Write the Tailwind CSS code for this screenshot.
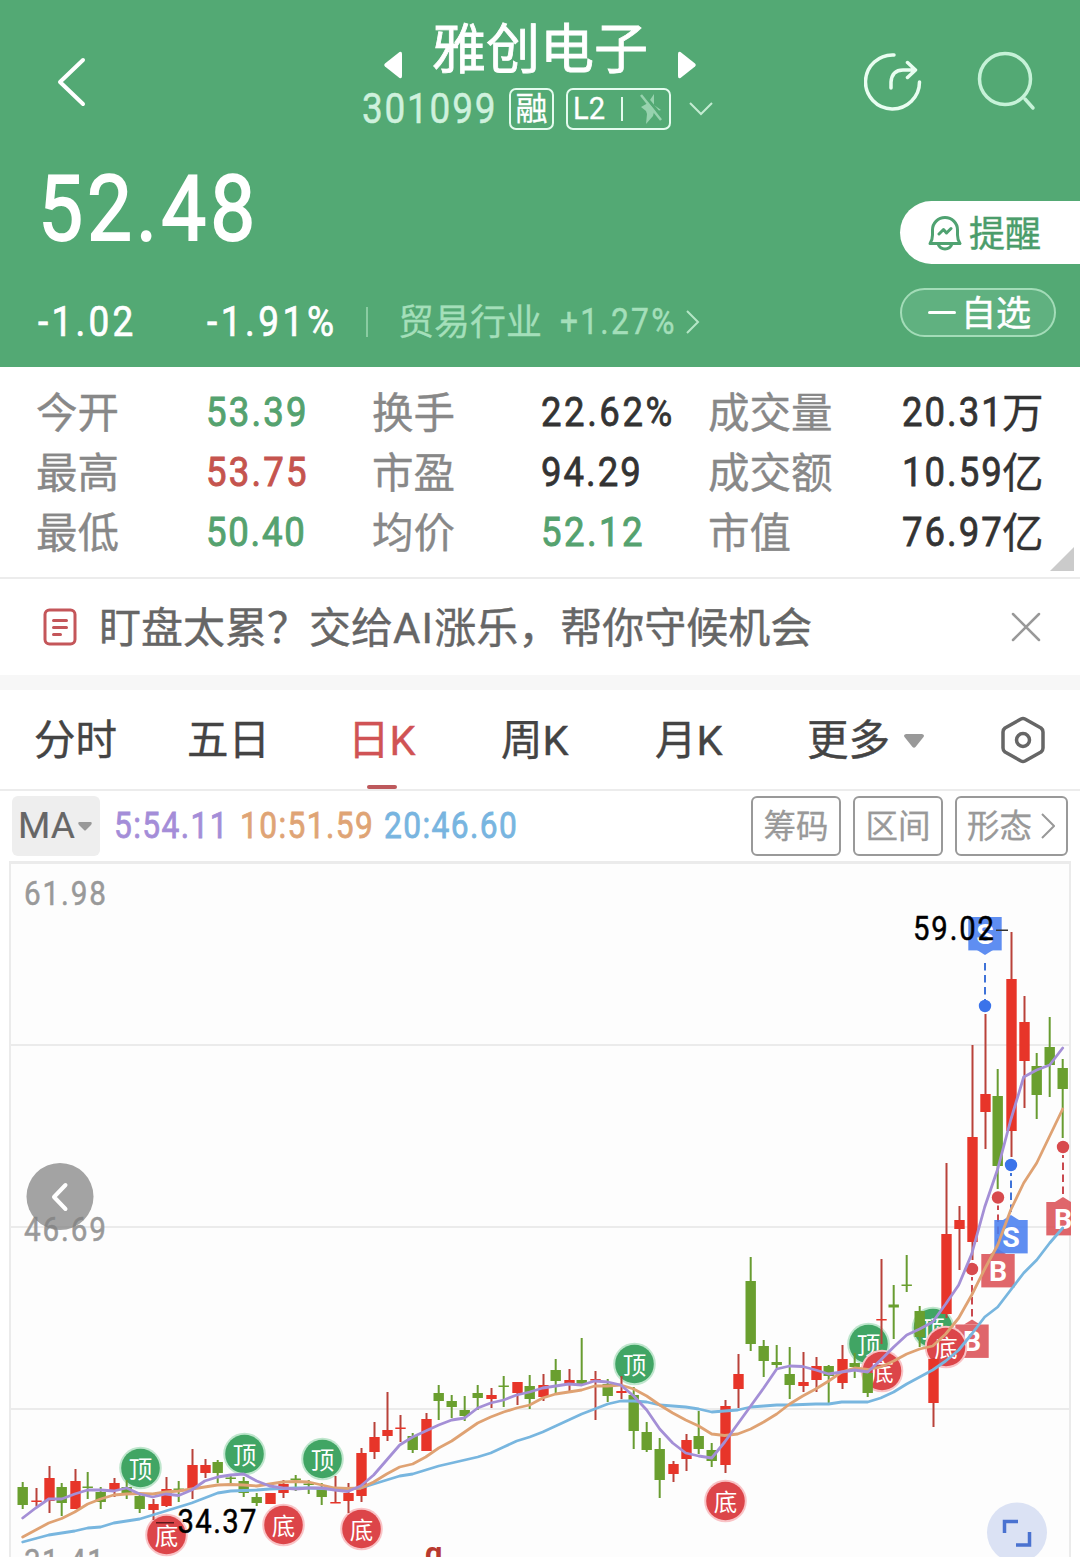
<!DOCTYPE html>
<html lang="zh-CN">
<head>
    <meta charset="UTF-8">
    <meta name="viewport" content="width=device-width, initial-scale=1.0">
    <title>雅创电子 301099</title>
    <script src="https://cdn.jsdelivr.net/npm/@tailwindcss/browser@4"></script>
</head>
<body class="w-[1080px] h-[1557px] overflow-hidden bg-white font-[Roboto,'Noto_Sans_CJK_SC',sans-serif] whitespace-nowrap">
    <!-- Header -->
    <header class="h-[367px] bg-[#53a974] text-white">
        <div class="h-[140px] grid grid-cols-[362px_356px_1fr]">
            <div class="pt-[56px] pl-[56px]">
                <svg class="w-[32px] h-[52px]" viewBox="0 0 32 52" fill="none" stroke="#fff" stroke-width="4" stroke-linecap="round" stroke-linejoin="round"><path d="M27 4L4 26L27 48"/></svg>
            </div>
            <div class="flex flex-col">
                <div class="h-[88px] flex items-start pl-[22px]">
                    <svg class="mt-[51px] w-[18px] h-[28px]" viewBox="0 0 18 28" fill="#fff"><path d="M15.5 1Q18 0 18 3V25Q18 28 15.5 27L1 15.5Q-.5 14 1 12.5Z"/></svg>
                    <h1 class="ml-[30px] mt-[11px] text-[54px] leading-[80px] [-webkit-text-stroke:0.8px]">雅创电子</h1>
                    <svg class="ml-[30px] mt-[51px] w-[18px] h-[28px]" viewBox="0 0 18 28" fill="#fff"><path d="M2.5 1Q0 0 0 3V25Q0 28 2.5 27L17 15.5Q18.500 14 17 12.500Z"/></svg>
                </div>
                <div class="h-[42px] flex items-center">
                    <div class="w-[147px]"><span class="inline-block origin-left scale-x-[0.88] tracking-[2px] text-[42px] leading-[42px] text-[#cff1dd] [-webkit-text-stroke:0.5px]">301099</span></div>
                    <div class="w-[45px] h-[42px] border-2 border-[#e4fbee] rounded-[7px] text-[32px] leading-[38px] text-center [-webkit-text-stroke:0.3px]"><span class="-mx-1">融</span></div>
                    <div class="ml-[12px] w-[105px] h-[42px] border-2 border-[#e4fbee] rounded-[7px] flex items-center pl-[5px]">
                        <span class="w-[48px] text-[31px] leading-[38px] [-webkit-text-stroke:0.3px]"><span class="inline-block origin-left scale-x-[0.94]">L2</span></span>
                        <span class="w-[2px] h-[24px] bg-[#e4fbee]"></span>
                        <svg class="ml-[17px] w-[22px] h-[32px]" viewBox="0 0 22 32"><path fill="#97d2ae" d="M14 1L8 10L1 14L6 18L7 21L6 31L13 23L14 19L21 17L14 12Z"/><path stroke="#53a974" stroke-width="3" d="M4 2L24 26"/><path stroke="#97d2ae" stroke-width="2.500" d="M1 2L21 27"/></svg>
                    </div>
                    <svg class="ml-[18px] w-[24px] h-[14px]" viewBox="0 0 24 14" fill="none" stroke="#c3ecd2" stroke-width="2"><path d="M1 1L12 12L23 1"/></svg>
                </div>
            </div>
            <div class="flex pl-[146px] pt-[50px]">
                <svg class="w-[60px] h-[62px]" viewBox="0 0 60 62" fill="none" stroke="#e9fdf1" stroke-width="3.500" stroke-linecap="round" stroke-linejoin="round"><path d="M30 5A27 27 0 1 0 55.500 32M27 38V32Q28 20 39 20H50M43.500 12.500L51.500 20L43.500 27.500"/></svg>
                <svg class="ml-[52px] w-[62px] h-[62px]" viewBox="0 0 62 62" fill="none" stroke="#c6f2d8" stroke-width="3.500" stroke-linecap="round"><circle cx="29" cy="29" r="25.500"/><path d="M49 49L57 58"/></svg>
            </div>
        </div>

        <div class="h-[227px] grid grid-cols-[900px_180px]">
            <div class="pl-[38px]">
                <div class="h-[137px] pt-[23px]"><span class="inline-block origin-left scale-x-[0.88] tracking-[4.6px] text-[91px] leading-[92px] [-webkit-text-stroke:1.8px]">52.48</span></div>
                <div class="h-[90px] flex items-center text-[42px] leading-[44px]">
                    <div class="w-[169px] [-webkit-text-stroke:0.7px]"><span class="inline-block origin-left scale-x-[0.88] tracking-[3.7px]">-1.02</span></div>
                    <div class="w-[159px] [-webkit-text-stroke:0.7px]"><span class="inline-block origin-left scale-x-[0.88] tracking-[4px]">-1.91%</span></div>
                    <span class="w-[2px] h-[30px] bg-[#8acca2]"></span>
                    <span class="ml-[30px] pt-[2px] w-[162px] text-[36px] leading-[42px] text-[#a4dfba] [-webkit-text-stroke:0.3px]">贸易行业</span>
                    <div class="w-[126px] text-[36px] leading-[42px] text-[#a4dfba] [-webkit-text-stroke:0.5px]"><span class="inline-block origin-left scale-x-[0.88] tracking-[2.600px]">+1.27%</span></div>
                    <svg class="w-[14px] h-[24px]" viewBox="0 0 14 24" fill="none" stroke="#b4e6c6" stroke-width="2"><path d="M1 1L12 12L1 23"/></svg>
                </div>
            </div>
            <div class="pt-[61px]">
                <div class="h-[63px] rounded-l-full bg-white flex items-center pl-[28px] text-[#4b9d6b] text-[36px] leading-[60px]">
                    <svg class="w-[34px] h-[36px] mr-[7px] mt-[1px]" viewBox="0 0 34 36" fill="none" stroke="#4fa271" stroke-width="3" stroke-linejoin="round" stroke-linecap="round"><path d="M4.500 20V15A12.500 12.500 0 0 1 29.500 15V20Q29.500 25 32 28.500H2Q4.500 25 4.500 20ZM10 29Q12 34 17 34Q22 34 24 29M11 19L15.500 14.500L18.500 18L23 13.500"/></svg>
                    <span class="pt-[4px] [-webkit-text-stroke:0.4px]">提醒</span>
                </div>
                <div class="mt-[24px] w-[156px] h-[49px] border-2 border-[#a3dcb8] rounded-full bg-[#60b180] flex items-center pl-[26px] text-[35px] leading-[44px]">
                    <span class="w-[28px] h-[3px] mr-[5px] rounded bg-white"></span><span class="pt-[4px] [-webkit-text-stroke:0.5px]">自选</span>
                </div>
            </div>
        </div>
    </header>

    <!-- Quote figures -->
    <section class="relative h-[212px] border-b-2 border-[#ececec] pt-[15px] pl-[37px] grid grid-cols-[169px_167px_168px_168px_193px_1fr] auto-rows-[60px] items-center content-start text-[41.5px] leading-[60px] text-[#888] [-webkit-text-stroke:0.35px]">
        <span class="pt-[4px] -ml-px">今开</span>
        <span class="inline-block origin-left scale-x-[0.88] tracking-[2.500px] text-[#55a26f] [-webkit-text-stroke:1px]">53.39</span>
        <span class="pt-[4px] -ml-px">换手</span>
        <span class="inline-block origin-left scale-x-[0.88] tracking-[2.900px] text-[#333] [-webkit-text-stroke:0.8px]">22.62%</span>
        <span class="pt-[4px] -ml-px">成交量</span>
        <div class="flex items-center text-[#333]"><span class="w-[100px] [-webkit-text-stroke:0.8px]"><span class="inline-block origin-left scale-x-[0.88] tracking-[2.300px]">20.31</span></span><span class="pt-[4px]">万</span></div>
        <span class="pt-[4px] -ml-px">最高</span>
        <span class="inline-block origin-left scale-x-[0.88] tracking-[2.500px] text-[#c5544e] [-webkit-text-stroke:1px]">53.75</span>
        <span class="pt-[4px] -ml-px">市盈</span>
        <span class="inline-block origin-left scale-x-[0.88] tracking-[2.300px] text-[#333] [-webkit-text-stroke:0.8px]">94.29</span>
        <span class="pt-[4px] -ml-px">成交额</span>
        <div class="flex items-center text-[#333]"><span class="w-[100px] [-webkit-text-stroke:0.8px]"><span class="inline-block origin-left scale-x-[0.88] tracking-[2.300px]">10.59</span></span><span class="pt-[4px]">亿</span></div>
        <span class="pt-[4px] -ml-px">最低</span>
        <span class="inline-block origin-left scale-x-[0.88] tracking-[2px] text-[#55a26f] [-webkit-text-stroke:1px]">50.40</span>
        <span class="pt-[4px] -ml-px">均价</span>
        <span class="inline-block origin-left scale-x-[0.88] tracking-[2.800px] text-[#55a26f] [-webkit-text-stroke:1px]">52.12</span>
        <span class="pt-[4px] -ml-px">市值</span>
        <div class="flex items-center text-[#333]"><span class="w-[100px] [-webkit-text-stroke:0.8px]"><span class="inline-block origin-left scale-x-[0.88] tracking-[2.300px]">76.97</span></span><span class="pt-[4px]">亿</span></div>
        <svg class="absolute right-[6px] bottom-[6px] w-[24px] h-[24px]" viewBox="0 0 24 24" fill="#cbcbcb"><path d="M24 0V24H0Z"/></svg>
    </section>

    <!-- Banner -->
    <section class="h-[96px] flex items-center pl-[43px] pr-[39px] text-[#666]">
        <svg class="w-[34px] h-[38px]" viewBox="0 0 34 38" fill="none" stroke="#c4565a" stroke-width="3" stroke-linecap="round"><rect x="2" y="2" width="30" height="34" rx="4.500"/><path d="M10.500 12.500H23.500M10.500 19.500H23.500M10.500 26.500H17.500"/></svg>
        <p class="ml-[22px] pt-[4px] grow text-[42px] leading-[60px] [-webkit-text-stroke:0.4px]">盯盘太累？交给<span class="tracking-[1.200px]">AI</span>涨乐，帮你守候机会</p>
        <svg class="w-[30px] h-[30px]" viewBox="0 0 30 30" stroke="#999" stroke-width="2.500" stroke-linecap="round"><path d="M2 2L28 28M28 2L2 28"/></svg>
    </section>
    <div class="h-[15px] bg-[#f7f7f7]"></div>

    <!-- Period tabs -->
    <nav class="h-[101px] border-b-2 border-[#ececec] grid grid-cols-[152px_161px_153px_154px_152px_194px_1fr] items-center pl-[35px] text-[41.5px] leading-[60px] text-[#444] [-webkit-text-stroke:0.4px]">
        <span class="pt-[3px] -ml-px">分时</span>
        <span class="pt-[3px]">五日</span>
        <div class="relative h-full flex items-center text-[#d05355]"><span class="pt-[3px]">日K</span><span class="absolute left-[19px] bottom-0 w-[30px] h-[4px] rounded-full bg-[#bd595c]"></span></div>
        <span class="pt-[3px]">周K</span>
        <span class="pt-[3px]">月K</span>
        <div class="flex items-center"><span class="pt-[3px]">更多</span><svg class="ml-[14px] mt-[2px] w-[20px] h-[14px]" viewBox="0 0 20 14" fill="#999"><path d="M2 0H18Q21 1 19.500 3L11.500 13Q10 14.500 8.500 13L.5 3Q-1 1 2 0Z"/></svg></div>
        <svg class="w-[44px] h-[48px]" viewBox="0 0 44 48" fill="none" stroke="#666" stroke-width="3.500" stroke-linejoin="round"><path d="M20 3Q22 2 24 3L40 12Q42 13.500 42 16V32Q42 34.500 40 36L24 45Q22 46 20 45L4 36Q2 34.500 2 32V16Q2 13.500 4 12Z"/><circle cx="22" cy="24" r="6.500"/></svg>
    </nav>

    <!-- Moving averages and chart tools -->
    <div class="h-[70px] pt-[5px] pl-[12px] pr-[12px] flex items-start text-[36px] leading-[60px] [-webkit-text-stroke:0.8px]">
        <div class="w-[88px] h-[60px] rounded-[6px] bg-[#eee] flex items-center pl-[6px] text-[#666] text-[37px] leading-[60px] [-webkit-text-stroke:0.2px]"><span class="w-[60px] -mt-[1px]">MA</span><svg class="w-[14px] h-[9px]" viewBox="0 0 14 9" fill="#999"><path d="M1 0H13Q14.500 1 13 3L8 8Q7 9 6 8L1 3Q-.5 1 1 0Z"/></svg></div>
        <div class="ml-[14px] w-[126px] text-[#a48dd8]"><span class="inline-block origin-left scale-x-[0.88] tracking-[1.600px]">5:54.11</span></div>
        <div class="w-[144px] text-[#dfa475]"><span class="inline-block origin-left scale-x-[0.88] tracking-[1.600px]">10:51.59</span></div>
        <div class="grow text-[#78b5e0]"><span class="inline-block origin-left scale-x-[0.88] tracking-[1.600px]">20:46.60</span></div>
        <div class="flex gap-[12px] text-[32.500px] leading-[58px] text-[#999] [-webkit-text-stroke:0.3px]">
            <span class="w-[90px] h-[60px] border-2 border-[#999] rounded-[6px] text-center">筹码</span>
            <span class="w-[90px] h-[60px] border-2 border-[#999] rounded-[6px] text-center">区间</span>
            <div class="w-[113px] h-[60px] border-2 border-[#999] rounded-[6px] pl-[10px] flex items-center"><span class="pt-[2px]">形态</span><svg class="ml-[9px] w-[14px] h-[26px]" viewBox="0 0 14 26" fill="none" stroke="#999" stroke-width="2"><path d="M1 1L13 13L1 25"/></svg></div>
        </div>
    </div>

    <!-- K-line chart, drawn by the script below -->
    <svg id="chart" class="block w-[1080px] h-[696px]" viewBox="0 861 1080 696" font-family="Roboto, 'Noto Sans CJK SC', sans-serif"></svg>

    <script>
        // each candle: colour, high, body top, body bottom, low
        var candles = [
            ['g',1482,1487,1505,1509], ['r',1488,1500.5,1502,1506], ['r',1466,1478,1501,1513], ['g',1483,1487,1503,1516],
            ['r',1469,1481,1509,1509], ['g',1472,1486.5,1488,1499], ['g',1487,1492,1502,1509], ['r',1478,1483,1490,1497],
            ['g',1480,1487,1494,1499], ['g',1492,1496,1509,1513], ['r',1499,1504,1510,1520], ['r',1477,1489,1506,1507],
            ['g',1481,1488.5,1490.5,1502], ['r',1449,1465,1489,1499], ['r',1459,1465,1473,1478], ['g',1460,1462,1473,1483],
            ['g',1475,1477.5,1479,1484], ['g',1477,1481,1493,1497], ['g',1493,1497,1503,1506], ['r',1493,1493,1504,1504],
            ['r',1480,1484,1493,1498], ['g',1475,1478.5,1480,1491], ['g',1480,1483.5,1485,1494], ['g',1483,1488,1497,1505],
            ['r',1476,1502,1503.5,1503], ['r',1483,1493,1501,1513], ['r',1448,1453,1496,1502], ['r',1422,1437,1452,1459],
            ['r',1392,1430,1436,1441], ['r',1415,1427.5,1429,1442], ['g',1433,1436,1450,1453], ['r',1413,1419,1451,1451],
            ['g',1385,1393,1401,1420], ['g',1395,1401,1407,1418], ['g',1396,1410,1416,1421], ['g',1385,1393,1398,1410],
            ['r',1388,1395,1399,1408], ['g',1376,1385.5,1387,1407], ['r',1382,1382,1393,1405], ['g',1375,1386,1399,1409],
            ['r',1374,1385,1397,1401], ['g',1359,1370,1381,1394], ['r',1369,1380,1385,1391], ['g',1338,1380,1384,1384],
            ['r',1371,1379,1380.5,1420], ['g',1379,1384,1396,1402], ['r',1376,1391,1393,1399], ['g',1387,1395,1431,1449],
            ['g',1422,1432,1450,1452], ['g',1438,1449,1480,1498], ['r',1461,1464,1474,1482], ['r',1434,1440,1459,1471],
            ['g',1411,1436,1449,1454], ['g',1443,1450,1461,1467], ['r',1400,1406,1465,1473], ['r',1354,1374,1389,1408],
            ['g',1257,1281,1344,1351], ['g',1340,1346,1361,1377], ['g',1345,1362,1365,1368], ['g',1347,1374,1385,1399],
            ['r',1352,1382,1386,1392], ['r',1357,1366,1380,1392], ['g',1365,1366,1376,1403], ['r',1345,1359,1383,1389],
            ['g',1353,1363,1367,1378], ['g',1370,1373,1393,1397], ['r',1259,1319,1320.5,1344], ['g',1285,1304.5,1307.5,1339],
            ['g',1255,1284.5,1286,1292], ['g',1306,1311,1337,1347], ['r',1358,1359,1403,1427], ['r',1163,1234,1314,1318],
            ['r',1206,1220,1229,1270], ['r',1045,1137,1242,1260], ['r',1014,1094,1112,1149], ['g',1069,1096,1166,1189],
            ['r',932,979,1131,1157], ['r',996,1022,1061,1108], ['g',1053,1066,1095,1119], ['g',1017,1047,1065,1097],
            ['g',1059,1068,1089,1138]
        ];
        var ma5 = [1518,1508,1499,1499,1494,1490,1490,1491,1488,1494,1497,1494,1495.5,1490,1481,1477,1475,1474,1481,1486,1488,1489,1488,1488,1490,1491.5,1486,1475,1460,1445,1437,1431,1425,1420,1418,1408,1403,1400,1395,1392,1388,1386,1384,1385,1381,1382,1385,1396,1410,1429,1443,1453,1456,1458,1442,1424,1406,1388,1369,1366,1366.5,1370,1374,1372,1370,1372,1360,1347,1335,1329,1322,1304,1285,1254,1207,1169,1120,1077,1070,1065,1048];
        var ma10 = [1537,1530,1523,1518.5,1512,1504,1499,1495,1494,1493.5,1494,1492,1491,1489,1487,1485,1484.5,1485,1486,1484,1482,1481.5,1482,1485,1488,1488.5,1488,1482,1474,1467,1464,1457,1448,1441,1432,1423,1417,1412,1408,1405,1398,1394,1392,1390,1386,1386,1385,1389,1396,1405,1413,1420,1426,1434,1435.5,1434,1429,1422,1414,1404,1396,1389,1381,1372,1368,1369.5,1367,1361,1354,1349,1346,1334,1318,1295,1269,1245,1210,1183,1163,1136,1109];
        var ma20 = [1542,1538.5,1535,1533,1531,1528,1527,1523,1521,1519,1515,1511,1507,1503,1498,1493,1491,1490.5,1490,1489,1488.5,1488,1488,1488.5,1489,1489,1488,1484,1480,1476,1474,1470,1466,1463,1460,1457,1453,1447,1441,1437,1432,1426,1420,1414,1409,1404,1401,1401,1402,1405,1406,1407,1409,1412,1411,1410,1407,1406,1405,1405,1404.5,1404,1404,1402,1402,1402,1398,1392,1384,1377,1370,1361,1350,1334,1317,1307,1290,1273,1260,1243,1228];

        function xAt(i) {
            return 22.7 + i * 13;
        }
        function rect(x, y, w, h, fill) {
            return `<rect x="${x}" y="${y}" width="${w}" height="${h}" fill="${fill}"/>`;
        }
        // digits are squeezed a little and spaced out to the given width
        function label(x, y, size, width, fill, text) {
            return `<text transform="translate(${x} ${y}) scale(0.9 1)" font-size="${size}" textLength="${width / 0.9}" lengthAdjust="spacing" fill="${fill}" stroke="${fill}" stroke-width="0.5">${text}</text>`;
        }
        function line(values, color) {
            var points = values.map((y, i) => xAt(i) + ',' + y).join(' ');
            return `<polyline points="${points}" fill="none" stroke="${color}" stroke-width="2.8" stroke-linejoin="round" stroke-linecap="round"/>`;
        }
        function badge(x, y, text) {
            var top = text === '顶';
            return `<circle cx="${x}" cy="${y}" r="21.3" fill="${top ? '#bfe6cd' : '#f9c3c6'}"/><circle cx="${x}" cy="${y}" r="19.3" fill="${top ? '#41a564' : '#dc4549'}"/>
                <text x="${x}" y="${y + 9.5}" font-size="23.5" text-anchor="middle" fill="#fff">${text}</text>`;
        }
        // trade marker: square tag with a pointer, dashed lead and a dot
        function trade(x, tagTop, dotY, text) {
            var color = text === 'B' ? '#dc5257' : '#4a7ff0';
            var below = tagTop > dotY;
            var tip = below ? `${x - 8},${tagTop} ${x},${tagTop - 5} ${x + 8},${tagTop}` : `${x - 8},${tagTop + 33} ${x},${tagTop + 38} ${x + 8},${tagTop + 33}`;
            var lead = below ? `M${x} ${tagTop - 8}V${dotY + 8}` : `M${x} ${tagTop + 46}V${dotY - 6}`;
            return `<path d="${lead}" stroke="${text === 'B' ? '#c9494f' : '#3f73d8'}" stroke-width="2" stroke-dasharray="7.5 4.5"/>
                <g fill="${color}" opacity="0.88"><rect x="${x - 16.7}" y="${tagTop}" width="33.400" height="33.400"/><polygon points="${tip}"/></g>
                <circle cx="${x}" cy="${dotY}" r="6.2" fill="${text === 'B' ? '#d84a4d' : '#3a73ea'}"/>
                <text x="${x}" y="${tagTop + 26.5}" font-size="28.500" font-weight="700" text-anchor="middle" fill="#fff">${text}</text>`;
        }

        var out = '<defs><clipPath id="plot"><rect x="9" y="861" width="1062" height="700"/></clipPath></defs>';
        out += rect(9, 861, 1062, 700, '#ebebeb') + rect(11, 864, 1058, 700, '#fdfdfd');
        [1045, 1227, 1409].forEach(y => { out += rect(11, y - 1, 1058, 2, '#ebebeb'); });
        out += label(24, 905, 33, 82, '#999', '61.98') + label(24, 1241, 33, 82, '#999', '46.69') + label(24, 1573, 33, 80, '#999', '31.41');

        out += '<g clip-path="url(#plot)">';
        out += trade(998, 1254, 1197.5, 'B') + trade(972, 1324.5, 1269, 'B') + trade(1063, 1202, 1147, 'B');
        out += trade(985, 917, 1006, 'S') + trade(1011, 1220, 1165, 'S');
        out += '</g>';
        [[140.5,1468], [244.5,1454], [322.5,1459], [634.5,1364], [868.5,1344], [933,1328]].forEach(p => { out += badge(p[0], p[1], '顶'); });
        [[166.5,1535], [283.5,1525], [361.5,1529], [725.5,1501], [882,1371], [946,1347]].forEach(p => { out += badge(p[0], p[1], '底'); });

        candles.forEach(function (c, i) {
            var x = c[0] === 'r' ? xAt(i) + 0.8 : xAt(i);
            out += rect(x - 1, c[1], 2, c[4] - c[1], c[0] === 'r' ? '#b9423a' : '#689c31');
            out += rect(x - 5.2, c[2], 10.4, c[3] - c[2], c[0] === 'r' ? '#e73529' : '#6a9f2f');
        });
        out += line(ma20, '#78b6df') + line(ma10, '#dfa273') + line(ma5, '#a48fd6');

        out += label(913, 940, 32.5, 81, '#000', '59.02') + rect(996, 929.5, 12, 1.5, '#333');
        out += label(177.5, 1533, 32.5, 79, '#000', '34.37') + rect(156, 1522, 18, 1.5, '#5c1a1c');
        out += '<text x="425" y="1564" font-size="31" font-weight="700" fill="#b8392f">q</text>';

        // scroll-back and full-screen buttons
        out += '<circle cx="60" cy="1196.500" r="33.500" fill="#808080" opacity="0.72"/><path d="M65.500 1185L54 1197L65.500 1209" fill="none" stroke="#fff" stroke-width="4" stroke-linecap="round" stroke-linejoin="round"/>';
        out += '<circle cx="1017" cy="1532.500" r="30" fill="#dbe2f4"/><path d="M1004.500 1533V1521.500H1018M1029.500 1532V1545H1016" fill="none" stroke="#4a72d0" stroke-width="3.500"/>';
        document.getElementById('chart').innerHTML = out;
    </script>
</body>
</html>
